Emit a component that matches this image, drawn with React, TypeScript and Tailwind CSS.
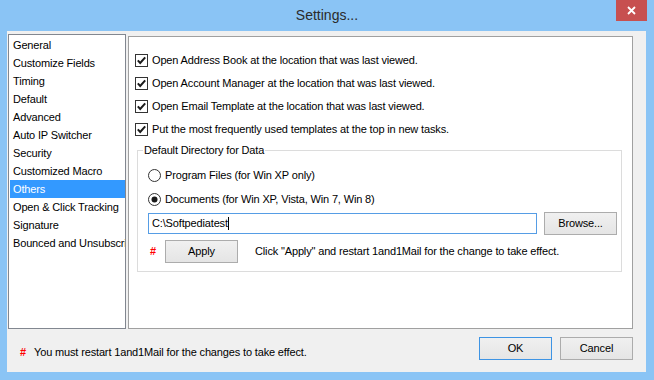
const pages = [
  "General",
  "Customize Fields",
  "Timing",
  "Default",
  "Advanced",
  "Auto IP Switcher",
  "Security",
  "Customized Macro",
  "Others",
  "Open & Click Tracking",
  "Signature",
  "Bounced and Unsubscribe",
];

const options = [
  "Open Address Book at the location that was last viewed.",
  "Open Account Manager at the location that was last viewed.",
  "Open Email Template at the location that was last viewed.",
  "Put the most frequently used templates at the top in new tasks.",
];

function CheckBox() {
  return (
    <svg width="13" height="13" viewBox="0 0 13 13" className="shrink-0">
      <rect x="0.5" y="0.5" width="12" height="12" fill="#fff" stroke="#333" />
      <path d="M2.8 6.4l2.4 2.6 5-5.6" fill="none" stroke="#1a1a1a" strokeWidth="2" />
    </svg>
  );
}

function Radio({ on }: { on?: boolean }) {
  return (
    <svg width="13" height="13" viewBox="0 0 13 13" className="shrink-0">
      <circle cx="6.5" cy="6.5" r="6" fill="#fff" stroke="#333" />
      {on && <circle cx="6.5" cy="6.5" r="3" fill="#1a1a1a" />}
    </svg>
  );
}

function Button({ label, width, focused }: { label: string; width: string; focused?: boolean }) {
  return (
    <div
      className={`${width} flex h-[23px] shrink-0 items-center justify-center border bg-linear-to-b from-[#f0f0f0] to-[#e5e5e5] ${
        focused ? "border-[#3e94e4]" : "border-[#acacac]"
      }`}
    >
      {label}
    </div>
  );
}

function Hash() {
  return <span className="font-bold text-[#ff0000]">#</span>;
}

export default function App() {
  return (
    <div className="flex h-[380px] w-[654px] flex-col bg-[#8ac4f5] font-['Liberation_Sans',Arial,sans-serif] text-[11px] tracking-[-0.15px] text-black">
      {/* title bar */}
      <div className="grid h-[31px] shrink-0 grid-cols-[1fr_auto_1fr]">
        <div />
        <div className="self-center text-[14px] tracking-normal text-[#2b2b2b]">Settings...</div>
        <div className="flex justify-end pr-[7px]">
          <div className="flex h-[21px] w-[31px] items-center justify-center bg-[#c75050]">
            <svg width="9" height="9" viewBox="0 0 9 9">
              <path d="M1 1l7 7M8 1l-7 7" stroke="#fff" strokeWidth="1.8" />
            </svg>
          </div>
        </div>
      </div>

      {/* client area */}
      <div className="ml-[7px] mr-[8px] flex h-[341px] flex-col bg-[#f0f0f0]">
        <div className="flex items-start">
          <div className="ml-[1px] mt-[3px] h-[295px] w-[118px] overflow-hidden border border-[#828790] bg-white pl-[1px] pt-[1px]">
            {pages.map((p) => (
              <div
                key={p}
                className={`h-[18px] overflow-hidden whitespace-nowrap pl-[3px] leading-[18px] ${
                  p === "Others" ? "bg-[#3399ff] text-white" : ""
                }`}
              >
                {p}
              </div>
            ))}
          </div>

          <div className="ml-[2px] mt-[5px] h-[293px] w-[505px] border border-[#a0a0a0] bg-white pt-[12px]">
            {options.map((o) => (
              <div key={o} className="flex h-[23px] items-center pl-[6px]">
                <CheckBox />
                <span className="ml-[4px]">{o}</span>
              </div>
            ))}

            <fieldset className="ml-[8px] mr-[10px] mt-[2px] border border-[#dcdcdc]">
              <legend className="ml-[5px] px-[1px] leading-[14px]">Default Directory for Data</legend>
              <div className="pb-[8px] pl-[10px] pt-[6px]">
                <div className="flex h-[24px] items-center">
                  <Radio />
                  <span className="ml-[4px]">Program Files (for Win XP only)</span>
                </div>
                <div className="flex h-[24px] items-center">
                  <Radio on />
                  <span className="ml-[4px]">Documents (for Win XP, Vista, Win 7, Win 8)</span>
                </div>
                <div className="mt-[1px] flex h-[23px] items-center">
                  <div className="flex h-[21px] w-[389px] items-center border border-[#569de5] bg-white pl-[3px]">
                    <span>{"C:\\Softpediatest"}</span>
                    <span className="h-[13px] w-px bg-black" />
                  </div>
                  <div className="ml-[7px]">
                    <Button label="Browse..." width="w-[73px]" />
                  </div>
                </div>
                <div className="mt-[5px] flex h-[23px] items-center">
                  <span className="w-[17px] pl-[2px]">
                    <Hash />
                  </span>
                  <Button label="Apply" width="w-[73px]" />
                  <span className="ml-[17px]">
                    Click "Apply" and restart 1and1Mail for the change to take effect.
                  </span>
                </div>
              </div>
            </fieldset>
          </div>
        </div>

        {/* bottom row */}
        <div className="flex items-start pr-[13px] pt-[8px]">
          <div className="mt-[8px] flex flex-1 pl-[13px] leading-[14px]">
            <span className="w-[14px]">
              <Hash />
            </span>
            <span>You must restart 1and1Mail for the changes to take effect.</span>
          </div>
          <Button label="OK" width="w-[73px]" focused />
          <div className="ml-[8px]">
            <Button label="Cancel" width="w-[73px]" />
          </div>
        </div>
      </div>
    </div>
  );
}
